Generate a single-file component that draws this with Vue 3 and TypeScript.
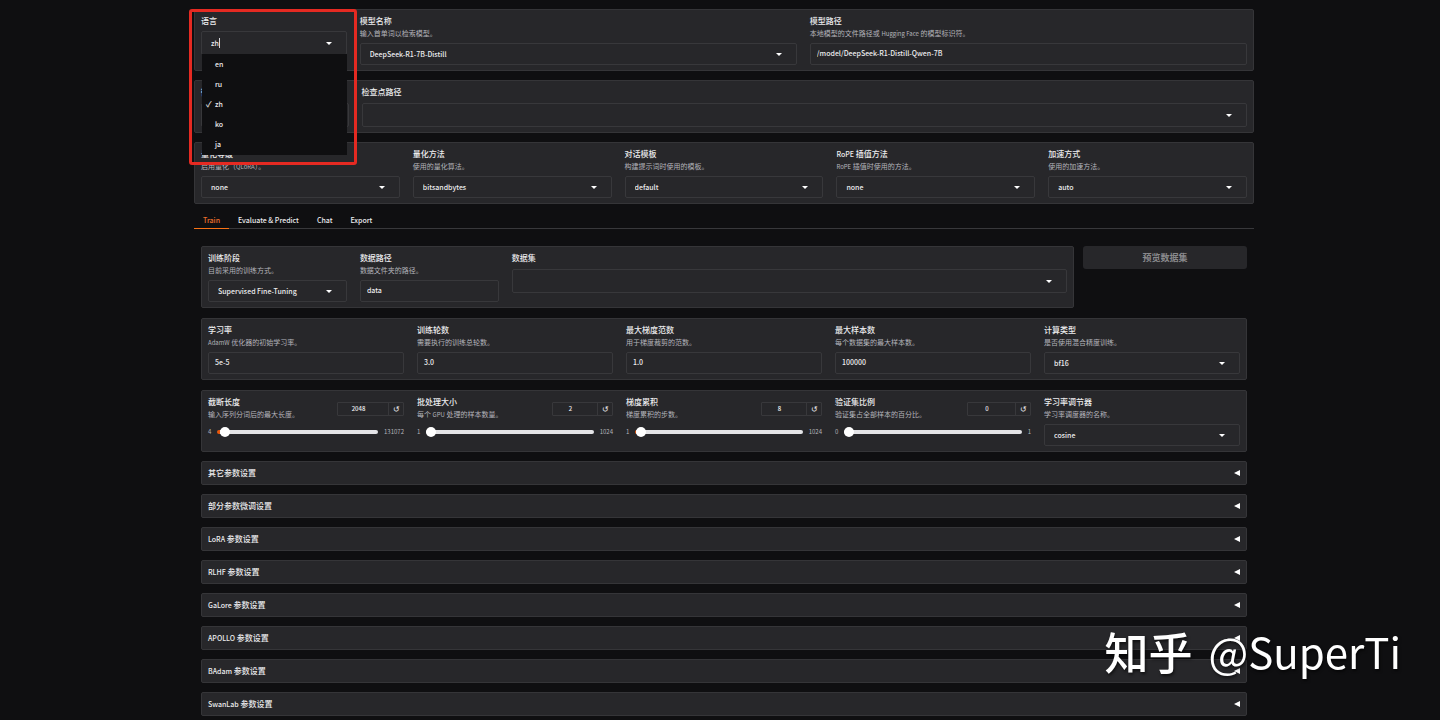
<script setup lang="ts">
import { h, ref } from 'vue'

interface Field {
  id: string
  label: string
  info?: string
  kind: 'select' | 'text' | 'slider'
  value: string
  min?: number
  max?: number
  step?: number
  size?: string
}

// Sets Latin runs one size down beside the Chinese text.
const Mixed = (props: { text?: string }) =>
  (props.text ?? '')
    .split(/([A-Za-z]+(?: [A-Za-z]+)*)/)
    .filter((part) => part !== '')
    .map((part) => (/^[A-Za-z]/.test(part) ? h('span', { class: 'latin' }, part) : part))
Mixed.props = ['text']

const languages = ['en', 'ru', 'zh', 'ko', 'ja']
const language = ref('zh')

const modelFields: Field[] = [
  { id: 'model-name', label: '模型名称', info: '输入首单词以检索模型。', kind: 'select', value: 'DeepSeek-R1-7B-Distill' },
  { id: 'model-path', label: '模型路径', info: '本地模型的文件路径或 Hugging Face 的模型标识符。', kind: 'text', value: '/model/DeepSeek-R1-Distill-Qwen-7B' },
]

const checkpointFields: Field[] = [
  { id: 'finetuning', label: '微调方法', kind: 'select', value: '' },
  { id: 'checkpoint', label: '检查点路径', kind: 'select', value: '' },
]

const methodFields: Field[] = [
  { id: 'quant-bit', label: '量化等级', info: '启用量化（QLoRA）。', kind: 'select', value: 'none' },
  { id: 'quant-method', label: '量化方法', info: '使用的量化算法。', kind: 'select', value: 'bitsandbytes' },
  { id: 'template', label: '对话模板', info: '构建提示词时使用的模板。', kind: 'select', value: 'default' },
  { id: 'rope', label: 'RoPE 插值方法', info: 'RoPE 插值时使用的方法。', kind: 'select', value: 'none' },
  { id: 'booster', label: '加速方式', info: '使用的加速方法。', kind: 'select', value: 'auto' },
]

const datasetFields: Field[] = [
  { id: 'stage', label: '训练阶段', info: '目前采用的训练方式。', kind: 'select', value: 'Supervised Fine-Tuning' },
  { id: 'data-dir', label: '数据路径', info: '数据文件夹的路径。', kind: 'text', value: 'data' },
  { id: 'dataset', label: '数据集', kind: 'select', value: '' },
]

const trainFields: Field[] = [
  { id: 'lr', label: '学习率', info: 'AdamW 优化器的初始学习率。', kind: 'text', value: '5e-5' },
  { id: 'epochs', label: '训练轮数', info: '需要执行的训练总轮数。', kind: 'text', value: '3.0' },
  { id: 'grad-norm', label: '最大梯度范数', info: '用于梯度裁剪的范数。', kind: 'text', value: '1.0' },
  { id: 'max-samples', label: '最大样本数', info: '每个数据集的最大样本数。', kind: 'text', value: '100000' },
  { id: 'compute', label: '计算类型', info: '是否使用混合精度训练。', kind: 'select', value: 'bf16' },
]

const batchFields = ref<Field[]>([
  { id: 'cutoff', label: '截断长度', info: '输入序列分词后的最大长度。', kind: 'slider', value: '2048', min: 4, max: 131072, step: 1, size: 'wide' },
  { id: 'batch', label: '批处理大小', info: '每个 GPU 处理的样本数量。', kind: 'slider', value: '2', min: 1, max: 1024, step: 1 },
  { id: 'accum', label: '梯度累积', info: '梯度累积的步数。', kind: 'slider', value: '8', min: 1, max: 1024, step: 1 },
  { id: 'val-size', label: '验证集比例', info: '验证集占全部样本的百分比。', kind: 'slider', value: '0', min: 0, max: 1, step: 0.001, size: 'mid' },
  { id: 'scheduler', label: '学习率调节器', info: '学习率调度器的名称。', kind: 'select', value: 'cosine' },
])

const defaults = batchFields.value.map((f) => f.value)

const topRows = [
  { name: 'checkpoint', fields: checkpointFields },
  { name: 'five', fields: methodFields },
]

const tabs = ['Train', 'Evaluate & Predict', 'Chat', 'Export']
const activeTab = ref('Train')

const sections = ['其它参数设置', '部分参数微调设置', 'LoRA 参数设置', 'RLHF 参数设置', 'GaLore 参数设置', 'APOLLO 参数设置', 'BAdam 参数设置', 'SwanLab 参数设置']

function fillOf(f: Field): number {
  const min = f.min ?? 0
  const max = f.max ?? 1
  return ((Number(f.value) - min) / (max - min)) * 100
}
</script>

<template>
  <main class="page">
    <section class="panel cols model">
      <div class="field">
        <label for="language">语言</label>
        <div class="control combo">
          <input id="language" v-model="language" class="box pick" type="text" role="combobox" aria-expanded="true" aria-controls="language-list" />
          <svg class="caret" viewBox="0 0 6 3" aria-hidden="true"><path d="M0 0h6L3 3z" /></svg>
          <span class="cursor"></span>
          <ul id="language-list" class="options" role="listbox">
            <li v-for="l in languages" :key="l" role="option" :aria-selected="l === language" @click="language = l">
              <span class="tick">{{ l === language ? '✓' : '' }}</span>{{ l }}
            </li>
          </ul>
          <div class="highlight"></div>
        </div>
      </div>
      <div v-for="f in modelFields" :key="f.id" class="field">
        <label :for="f.id">{{ f.label }}</label>
        <p class="info"><Mixed :text="f.info" /></p>
        <div class="control">
          <template v-if="f.kind === 'select'">
            <select :id="f.id" class="box pick"><option>{{ f.value }}</option></select>
            <svg class="caret" viewBox="0 0 6 3" aria-hidden="true"><path d="M0 0h6L3 3z" /></svg>
          </template>
          <input v-else :id="f.id" class="box" type="text" :value="f.value" />
        </div>
      </div>
    </section>

    <section v-for="row in topRows" :key="row.name" class="panel cols" :class="row.name">
      <div v-for="f in row.fields" :key="f.id" class="field" :class="{ bare: !f.info }">
        <label :for="f.id"><Mixed :text="f.label" /></label>
        <p v-if="f.info" class="info"><Mixed :text="f.info" /></p>
        <div class="control">
          <select :id="f.id" class="box pick"><option>{{ f.value }}</option></select>
          <svg class="caret" viewBox="0 0 6 3" aria-hidden="true"><path d="M0 0h6L3 3z" /></svg>
        </div>
      </div>
    </section>

    <div class="tabs" role="tablist">
      <button v-for="t in tabs" :key="t" type="button" role="tab" class="tab" :class="{ active: t === activeTab }" :aria-selected="t === activeTab" @click="activeTab = t">{{ t }}</button>
    </div>

    <div class="content">
      <div class="stack">
        <div class="dataset-row">
          <section class="panel cols dataset">
            <div v-for="f in datasetFields" :key="f.id" class="field" :class="{ bare: !f.info }">
              <label :for="f.id">{{ f.label }}</label>
              <p v-if="f.info" class="info">{{ f.info }}</p>
              <div class="control">
                <template v-if="f.kind === 'select'">
                  <select :id="f.id" class="box pick"><option>{{ f.value }}</option></select>
                  <svg class="caret" viewBox="0 0 6 3" aria-hidden="true"><path d="M0 0h6L3 3z" /></svg>
                </template>
                <input v-else :id="f.id" class="box" type="text" :value="f.value" />
              </div>
            </div>
          </section>
          <button type="button" class="preview" disabled>预览数据集</button>
        </div>

        <section class="panel cols five">
          <div v-for="f in trainFields" :key="f.id" class="field">
            <label :for="f.id">{{ f.label }}</label>
            <p class="info"><Mixed :text="f.info" /></p>
            <div class="control">
              <template v-if="f.kind === 'select'">
                <select :id="f.id" class="box pick"><option>{{ f.value }}</option></select>
                <svg class="caret" viewBox="0 0 6 3" aria-hidden="true"><path d="M0 0h6L3 3z" /></svg>
              </template>
              <input v-else :id="f.id" class="box" type="text" :value="f.value" />
            </div>
          </div>
        </section>

        <section class="panel cols five">
          <div v-for="(f, i) in batchFields" :key="f.id" class="field">
            <template v-if="f.kind === 'slider'">
              <div class="slider-head">
                <div>
                  <label :for="f.id">{{ f.label }}</label>
                  <p class="info"><Mixed :text="f.info" /></p>
                </div>
                <div class="number" :class="f.size">
                  <input v-model="f.value" type="text" :aria-label="f.label" />
                  <button type="button" aria-label="Reset" @click="f.value = defaults[i]">↺</button>
                </div>
              </div>
              <div class="slider-row">
                <span>{{ f.min }}</span>
                <input :id="f.id" v-model="f.value" type="range" :min="f.min" :max="f.max" :step="f.step" :style="{ '--fill': fillOf(f) + '%' }" />
                <span>{{ f.max }}</span>
              </div>
            </template>
            <template v-else>
              <label :for="f.id">{{ f.label }}</label>
              <p class="info">{{ f.info }}</p>
              <div class="control">
                <select :id="f.id" class="box pick"><option>{{ f.value }}</option></select>
                <svg class="caret" viewBox="0 0 6 3" aria-hidden="true"><path d="M0 0h6L3 3z" /></svg>
              </div>
            </template>
          </div>
        </section>
      </div>

      <div class="sections">
        <button v-for="s in sections" :key="s" type="button" class="section" aria-expanded="false">
          <span><Mixed :text="s" /></span>
          <svg viewBox="0 0 6 6" aria-hidden="true"><path d="M6 0v6L0 3z" /></svg>
        </button>
      </div>
    </div>

    <div class="watermark"><b>知乎</b><span>@SuperTi</span></div>
  </main>
</template>

<style>
html {
  background: #0f0f11;
}
.latin {
  font-size: 7px;
}
.info .latin {
  font-size: 6px;
}
</style>

<style scoped>
.page,
.page * {
  box-sizing: border-box;
}
.page {
  max-width: 1068px;
  margin: 0 auto;
  padding: 9px 0 4px 8px;
  color: #ececee;
  font-family: 'Noto Sans CJK SC', sans-serif;
  font-size: 8px;
  line-height: 12px;
}
button,
input,
select {
  margin: 0;
  font: inherit;
  color: inherit;
  border-radius: 0;
  outline: 0;
}
.panel {
  padding: 5px 6px;
  background: #27272a;
  border: 1px solid #353538;
  border-radius: 2px;
}
.panel + .panel {
  margin-top: 9px;
}
.cols {
  display: grid;
  column-gap: 13px;
}
.model {
  grid-template-columns: 1fr 3fr 3fr;
}
.checkpoint {
  grid-template-columns: 1fr 6fr;
}
.five {
  grid-template-columns: repeat(5, 1fr);
}
.dataset {
  grid-template-columns: 1fr 1fr 4fr;
}
.field {
  min-width: 0;
}
label {
  display: block;
  height: 12px;
  font-weight: 500;
  white-space: nowrap;
}
.info {
  height: 12px;
  margin: 0;
  font-size: 7px;
  color: #b4b4bb;
  white-space: nowrap;
}
.control {
  display: grid;
  align-items: center;
  margin-top: 4px;
}
.control > .box,
.control > .caret {
  grid-area: 1 / 1;
}
.box {
  width: 100%;
  min-width: 0;
  height: 22px;
  padding: 0 6px 3px;
  background: #27272a;
  border: 1px solid #38383b;
  border-radius: 2px;
  appearance: none;
  font-size: 7px;
  font-weight: 500;
}
.pick {
  padding: 0 24px 0 9px;
}
.bare .control {
  margin-top: 5px;
}
.bare .box,
.combo .box {
  height: 24px;
}
.caret {
  justify-self: end;
  width: 6px;
  height: 3px;
  margin-right: 15px;
  fill: #fff;
  pointer-events: none;
}
.combo {
  position: relative;
}
.cursor {
  position: absolute;
  top: 7px;
  left: 18px;
  width: 1px;
  height: 10px;
  background: #d4d4d8;
}
.options {
  position: absolute;
  z-index: 2;
  top: 23px;
  left: 1px;
  right: 0;
  margin: 0;
  padding: 0 0 1px;
  list-style: none;
  background: #0f0f11;
}
.options li {
  display: flex;
  height: 20px;
  padding-left: 4px;
  font-size: 7px;
  line-height: 20px;
  font-weight: 500;
}
.tick {
  width: 9px;
  font-size: 8px;
}
.highlight {
  position: absolute;
  z-index: 3;
  inset: -22px -10px auto -12px;
  height: 156px;
  border: 3px solid #e52a22;
  border-radius: 3px;
  pointer-events: none;
}
.tabs {
  display: flex;
  margin-top: 7px;
  border-bottom: 1px solid #38383b;
}
.tab {
  height: 18px;
  margin-bottom: -1px;
  padding: 0 9px;
  background: none;
  border: 0;
  border-bottom: 1px solid transparent;
  font-size: 7px;
  font-weight: 500;
}
.tab.active {
  color: #f0702c;
  border-color: #f97316;
}
.content {
  padding: 17px 7px 0;
}
.stack {
  display: grid;
  gap: 10px;
}
.stack .panel {
  margin-top: 0;
}
.dataset-row {
  display: grid;
  grid-template-columns: 16fr 3fr;
  align-items: start;
  gap: 9px;
}
.preview {
  height: 23px;
  padding: 0;
  background: #27272a;
  border: 0;
  border-radius: 3px;
  color: #89898c;
  font-size: 9px;
  font-weight: 700;
}
.slider-head {
  display: flex;
  justify-content: space-between;
  align-items: center;
}
.number {
  display: flex;
  width: 61px;
  height: 14px;
  margin-top: 2px;
  border: 1px solid #38383b;
  border-radius: 1px;
}
.number.mid {
  width: 64px;
}
.number.wide {
  width: 67px;
}
.number input {
  flex: 1;
  min-width: 0;
  padding: 0 9px 0 0;
  background: none;
  border: 0;
  font-size: 6px;
  font-weight: 500;
  text-align: center;
}
.number button {
  width: 15px;
  padding: 0;
  background: none;
  border: 0;
  border-left: 1px solid #38383b;
  line-height: 12px;
}
.slider-row {
  display: flex;
  align-items: center;
  gap: 6px;
  margin-top: 6px;
  font-size: 6px;
  color: #b4b4bb;
}
input[type='range'] {
  flex: 1;
  min-width: 0;
  height: 10px;
  background: transparent;
  appearance: none;
}
input[type='range']::-webkit-slider-runnable-track {
  height: 4px;
  border-radius: 2px;
  background: linear-gradient(to right, #ea580c var(--fill), #e4e4e7 var(--fill));
}
input[type='range']::-webkit-slider-thumb {
  appearance: none;
  width: 10px;
  height: 10px;
  margin-top: -3px;
  border-radius: 50%;
  background: #fff;
}
.sections {
  display: grid;
  gap: 9px;
  margin-top: 9px;
}
.section {
  display: flex;
  justify-content: space-between;
  align-items: center;
  height: 24px;
  padding: 0 6px;
  background: #27272a;
  border: 1px solid #353538;
  border-radius: 2px;
  font-weight: 500;
}
.section svg {
  width: 6px;
  height: 6px;
  fill: #fff;
}
.watermark {
  position: fixed;
  z-index: 4;
  right: 39px;
  bottom: 39px;
  display: flex;
  gap: 16px;
  color: #fff;
  font-size: 42px;
  line-height: 60px;
  text-shadow: 1px 2px 3px rgba(0, 0, 0, 0.6);
  pointer-events: none;
}
.watermark b {
  font-size: 44px;
  font-weight: 500;
}
</style>
